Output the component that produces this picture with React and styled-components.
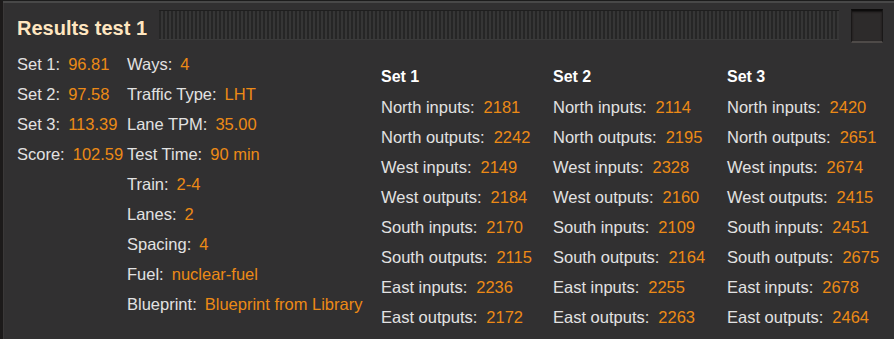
import React from 'react';
import styled, { createGlobalStyle } from 'styled-components';

const GlobalStyle = createGlobalStyle`
  html, body {
    margin: 0;
    padding: 0;
    background: #313031;
  }
  body {
    font-family: "Liberation Sans", Arial, sans-serif;
  }
`;

const Frame = styled.div`
  width: 894px;
  height: 339px;
  box-sizing: border-box;
  background: #313031;
  border-left: 3px solid #1c1a1a;
  border-top: 1px solid #1c1c1c;
  box-shadow: inset 0 2px 0 #484848, inset 1px 0 0 #3a3838;
  overflow: hidden;
`;

const TitleBar = styled.div`
  display: flex;
  align-items: flex-start;
  padding: 8px 11px 0 14px;
  height: 40px;
`;

const Title = styled.div`
  font-size: 20px;
  font-weight: 700;
  color: #ffe6c0;
  line-height: 33px;
  padding-top: 3px;
  white-space: nowrap;
`;

const DragHandle = styled.div`
  flex: 1;
  height: 30px;
  margin: 1px 12px 0 12px;
  background: repeating-linear-gradient(
    90deg,
    #262626 0px,
    #262626 2px,
    #363636 2px,
    #363636 4px
  );
  box-shadow: inset 0 1px 0 #1e1e1e, inset 0 -1px 0 #3a3a3a;
`;

const CloseButton = styled.div`
  width: 32px;
  height: 34px;
  box-sizing: border-box;
  background: #2d2b2b;
  border-top: 2px solid #0d0c0c;
  border-left: 1px solid #1a1818;
  border-right: 1px solid #1a1818;
  border-bottom: 2px solid #4e4a48;
  box-shadow: inset 0 1px 2px #141212;
`;

const Body = styled.div`
  display: flex;
  padding-left: 14px;
`;

const Params = styled.div`
  width: 364px;
  display: grid;
  grid-template-columns: 100px auto;
  column-gap: 10px;
  align-content: start;
`;

const Column = styled.div`
  display: flex;
  flex-direction: column;
`;

const Row = styled.div`
  display: flex;
  gap: ${p => p.gap || 8}px;
  height: 30px;
  line-height: 30px;
  font-size: 16.5px;
  white-space: nowrap;
`;

const Label = styled.span`
  color: #e2e2e2;
`;

const Value = styled.span`
  color: #ec8a16;
`;

const Sets = styled.div`
  display: grid;
  grid-template-columns: 172px 174px auto;
  padding-top: 13px;
`;

const SetHeader = styled.div`
  font-size: 16px;
  font-weight: 700;
  color: #ffffff;
  height: 30px;
  line-height: 30px;
`;

const Field = ({ label, value, gap }) => (
  <Row gap={gap}>
    <Label>{label}:</Label>
    <Value>{value}</Value>
  </Row>
);

const scores = [
  ['Set 1', '96.81'],
  ['Set 2', '97.58'],
  ['Set 3', '113.39'],
  ['Score', '102.59'],
];

const settings = [
  ['Ways', '4'],
  ['Traffic Type', 'LHT'],
  ['Lane TPM', '35.00'],
  ['Test Time', '90 min'],
  ['Train', '2-4'],
  ['Lanes', '2'],
  ['Spacing', '4'],
  ['Fuel', 'nuclear-fuel'],
  ['Blueprint', 'Blueprint from Library'],
];

const counters = [
  'North inputs',
  'North outputs',
  'West inputs',
  'West outputs',
  'South inputs',
  'South outputs',
  'East inputs',
  'East outputs',
];

const sets = [
  { name: 'Set 1', values: [2181, 2242, 2149, 2184, 2170, 2115, 2236, 2172] },
  { name: 'Set 2', values: [2114, 2195, 2328, 2160, 2109, 2164, 2255, 2263] },
  { name: 'Set 3', values: [2420, 2651, 2674, 2415, 2451, 2675, 2678, 2464] },
];

export default function App() {
  return (
    <>
      <GlobalStyle />
      <Frame>
        <TitleBar>
          <Title>Results test 1</Title>
          <DragHandle />
          <CloseButton />
        </TitleBar>
        <Body>
          <Params>
            <Column>
              {scores.map(([l, v]) => (
                <Field key={l} label={l} value={v} />
              ))}
            </Column>
            <Column>
              {settings.map(([l, v]) => (
                <Field key={l} label={l} value={v} />
              ))}
            </Column>
          </Params>
          <Sets>
            {sets.map(set => (
              <Column key={set.name}>
                <SetHeader>{set.name}</SetHeader>
                {counters.map((c, i) => (
                  <Field key={c} label={c} value={set.values[i]} gap={9} />
                ))}
              </Column>
            ))}
          </Sets>
        </Body>
      </Frame>
    </>
  );
}
